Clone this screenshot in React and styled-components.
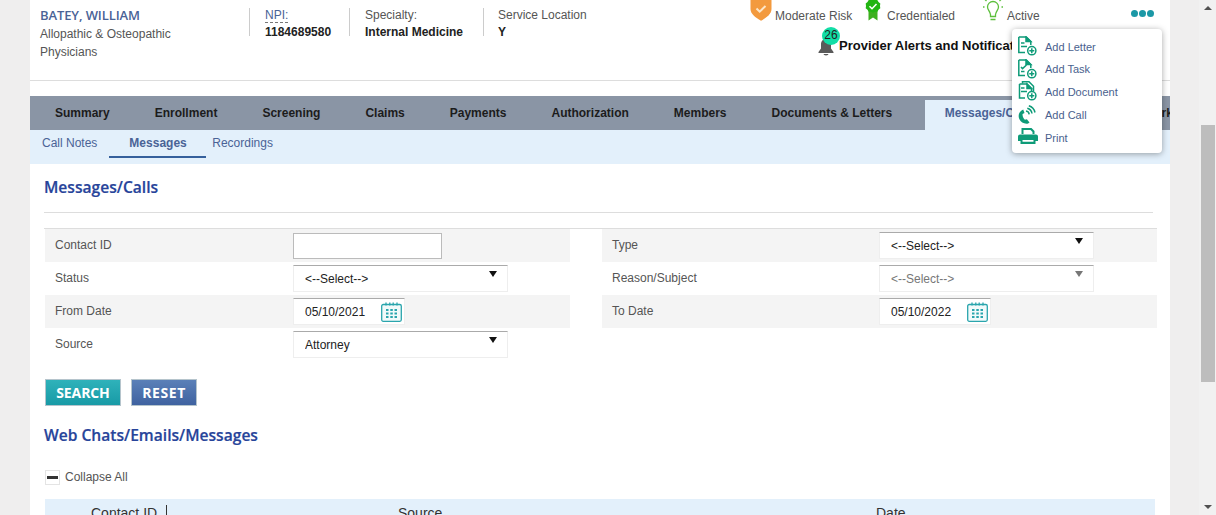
import React from "react";
import styled, { createGlobalStyle } from "styled-components";

const Global = createGlobalStyle`
  html, body { margin: 0; padding: 0; height: 515px; overflow: hidden; background: #fff; }
  body { font-family: "Liberation Sans", Arial, sans-serif; font-size: 12px; color: #555; }
  * { box-sizing: border-box; }
`;

const Page = styled.div`display: flex; width: 1216px; height: 515px; overflow: hidden; background: #efeeee;`;
const Main = styled.main`position: relative; margin-left: 30px; width: 1140px; height: 515px; background: #fff; overflow: hidden;`;
const Scrollbar = styled.div`
  margin-left: 29px; width: 17px; height: 515px; background: #f1f1f1; display: flex; flex-direction: column;
  align-items: center; position: relative;
`;
const ScrollArrow = styled.div`
  position: absolute; ${p => (p.$down ? "bottom: 6px;" : "top: 6px;")}
  width: 0; height: 0; border-left: 4px solid transparent; border-right: 4px solid transparent;
  ${p => (p.$down ? "border-top: 4px solid #505050;" : "border-bottom: 4px solid #505050;")}
`;
const Thumb = styled.div`margin-top: 125px; width: 14px; height: 257px; background: #bdbdbd;`;

const Header = styled.header`display: flex; height: 81px; border-bottom: 1px solid #ddd; padding-left: 10px;`;
const NameCol = styled.div`width: 209px; padding-top: 7px;`;
const ProviderName = styled.div`font-family: "Open Sans", sans-serif; font-weight: 600; font-size: 13px; line-height: 16px; color: #4a6396; letter-spacing: -0.1px;`;
const ProviderType = styled.div`margin-top: 2px; width: 150px; line-height: 18px; color: #555;`;
const InfoCol = styled.div`
  height: 28px; margin-top: 8px; padding-left: ${p => p.$pl || 15}px; width: ${p => p.$w}px; border-left: 1px solid #ccc;
`;
const InfoLabel = styled.div`line-height: 15px; color: ${p => (p.$npi ? "#4a6396" : "#555")};`;
const Dashed = styled.span`border-bottom: 1px dashed #777;`;
const InfoValue = styled.div`margin-top: 2px; line-height: 15px; font-weight: 700; color: #222;`;

const StatusBlock = styled.div`margin-left: 17px; width: 411px;`;
const StatusRow = styled.div`display: flex; height: 29px; align-items: flex-start;`;
const StatusItem = styled.div`display: flex; align-items: flex-start; width: ${p => p.$w}px;`;
const StatusText = styled.span`margin: 9px 0 0 ${p => p.$ml}px; line-height: 14px; color: #555;`;
const Dots = styled.div`display: flex; gap: 1px; margin: 10px 0 0 0;`;
const Dot = styled.i`display: block; width: 7px; height: 7px; border-radius: 50%; background: #1b98a6;`;
const AlertRow = styled.div`display: flex; align-items: center; margin: 0 0 0 67px; height: 32px; white-space: nowrap;`;
const BellWrap = styled.div`position: relative; width: 22px; height: 18px; margin-top: 3px;`;
const Badge = styled.span`
  position: absolute; left: 5px; top: -11px; width: 18px; height: 18px; border-radius: 50%; background: #12dda6;
  text-align: center; line-height: 17px; font-size: 12px; color: #222;
`;
const AlertText = styled.span`font-size: 13px; font-weight: 700; color: #111;`;

const Menu = styled.div`
  position: absolute; left: 982px; top: 29px; width: 150px; height: 124px; background: #fff; border-radius: 4px;
  box-shadow: 0 1px 6px rgba(0,0,0,.35); padding: 6px 0 0 6px; z-index: 5;
`;
const MenuItem = styled.div`
  display: flex; align-items: center; height: 23px; color: #4a5f8e; font-size: 11px;
  &:first-child { margin-bottom: -1px; }
`;
const MenuIcon = styled.span`display: flex; width: 27px; height: 23px; align-items: center; padding-bottom: ${p => p.$up || 0}px;`;

const Nav = styled.nav`display: flex; margin-top: 15px; padding-left: 2.5px; height: 34px; background: #8a95a5; overflow: hidden; white-space: nowrap;`;
const Tab = styled.div`
  flex: none; padding: ${p => (p.$active ? "0 17px 0 20px" : "0 22.5px")}; margin: ${p => (p.$active ? "4px 0 0 10px" : "0")};
  height: ${p => (p.$active ? 30 : 34)}px; line-height: ${p => (p.$active ? 26 : 34)}px; font-weight: 700;
  color: ${p => (p.$active ? "#4a6396" : "#1c1c1c")}; background: ${p => (p.$active ? "#e3f0fb" : "transparent")};
`;
const SubNav = styled.div`display: flex; height: 34px; background: #e3f0fb; padding-left: 12px; color: #4a6396;`;
const SubTab = styled.div`
  height: 28px; line-height: 26px; margin-right: ${p => p.$mr}px; padding: ${p => (p.$active ? "0 19.5px 0 20px" : "0")};
  font-weight: ${p => (p.$active ? 700 : 400)}; border-bottom: ${p => (p.$active ? "2px solid #35609c" : "none")};
`;

const Content = styled.div`padding-left: 14px;`;
const Title = styled.h2`
  margin: ${p => p.$mt}px 0 0; font-family: "Open Sans", sans-serif; font-size: 15.6px; line-height: 22px; font-weight: 600;
  color: #27449a; -webkit-text-stroke: .2px #27449a;
`;
const Rule = styled.div`margin-top: 14px; width: 1109px; height: 1px; background: #ddd;`;
const Form = styled.div`
  display: grid; grid-template-columns: 525px 555px; column-gap: 32px; margin-top: 15px; padding-left: 1px; width: 1113px;
  border-top: 1px solid #ddd;
`;
const Col = styled.div``;
const Row = styled.div`display: flex; align-items: center; height: 33px; background: ${p => (p.$alt ? "#f4f4f4" : "#fff")};`;
const Label = styled.label`flex: none; width: ${p => p.$w}px; padding: 0 0 2px 10px; color: #555;`;
const TextInput = styled.input`
  width: 149px; height: 26px; border: 1px solid #bbb; background: #fff; outline: none; padding: 0;
`;
const SelectWrap = styled.div`
  position: relative; width: 215px; height: 27px;
  &::after {
    content: ""; position: absolute; right: 11px; top: 6px; width: 0; height: 0; border-left: 4.5px solid transparent;
    border-right: 4.5px solid transparent; border-top: 6px solid ${p => (p.$disabled ? "#777" : "#111")};
  }
`;
const Select = styled.select`
  appearance: none; width: 100%; height: 100%; padding: 0 0 0 11px; background: #fff; font: 12px "Liberation Sans", Arial, sans-serif;
  color: ${p => (p.disabled ? "#777" : "#222")}; opacity: 1;
  border: 1px solid #eee; border-top: 1px solid #aaa; border-radius: 0; outline: none;
`;
const DateBox = styled.div`
  display: flex; align-items: center; width: 112px; height: 27px; background: #fff; border: 1px solid #eee; border-top: 1px solid #aaa;
  padding-left: 11px; color: #222;
`;
const DateText = styled.span`width: 76px;`;

const Buttons = styled.div`display: flex; gap: 10px; margin: 18px 0 0 1px;`;
const Button = styled.button`
  width: ${p => p.$w}px; height: 27px; border: 1px solid #b5c4cc; padding: 0; color: #fff;
  font-family: "Open Sans", sans-serif; font-size: 14px; font-weight: 700; letter-spacing: ${p => (p.$reset ? ".6px" : "-.1px")};
  background: ${p => (p.$reset ? "linear-gradient(#5b80b8,#3f62a0)" : "linear-gradient(#2fb2ba,#189aa6)")};
`;
const Collapse = styled.div`display: flex; align-items: center; margin: 24px 0 0 1px; height: 15px;`;
const CollapseBox = styled.span`
  display: flex; align-items: center; justify-content: center; width: 15px; height: 15px; border: 1px solid #e4e4e4; margin-right: 5px;
  &::before { content: ""; width: 11px; height: 3px; background: #333; }
`;
const CollapseText = styled.span`margin-bottom: 2px;`;
const TableHead = styled.div`
  display: flex; margin: 14px 0 0 1px; width: 1110px; height: 40px; background: #e3f0fb; padding-left: 46px;
  font-size: 14px; color: #333; line-height: 28px;
`;
const Th = styled.div`width: ${p => p.$w}px; flex: none;`;
const ThBorder = styled.span`display: inline-block; margin-left: 9px; width: 1px; height: 16px; background: #333; vertical-align: top; margin-top: 6px;`;

const G = "#0e9b78";
const DocIcon = ({ kind }) => (
  <svg width="19" height="20" viewBox="0 0 19 20" fill="none" stroke={G} strokeWidth="1.5">
    {kind === "stack" && <path d="M4.500 2.500V.8h6.500l4.500 4.500v5" />}
    <path d={kind === "stack" ? "M1.500 3h7.500l4.500 4.500v3M7 17H1.500V3" : "M.8 1h7.500l4.500 4.500v3.500M7 16.500H.8V1"} />
    <path d={kind === "stack" ? "M9 3v4.500h4.500z" : "M8 1v4.500h4.800z"} fill={G} />
    {kind === "check"
      ? <path d="M3 8l1.500 1.600L8.500 6M3 12.500h3.500" />
      : <path d="M3 7h3.500M3 10.500h6" />}
    <circle cx="13.800" cy="14.700" r="4.100" />
    <path d="M13.800 12.200v5M11.300 14.700h5" />
  </svg>
);
const CallIcon = () => (
  <svg width="19" height="19" viewBox="0 0 19 19" fill="none">
    <path d="M5.200 4.500C1 6.500-.3 10.500 1.300 14c1.500 3.300 5.200 5.300 8.800 4.500l1.400-1-2.600-3.300-2 .6C5.400 13.600 4.300 11 4.600 9l1.900-1.100z" fill={G} />
    <path d="M8 6a3.800 3.800 0 0 1 3.200 3.400M9.300 3.200a6.500 6.500 0 0 1 4.700 5.300M10.800.7a9 9 0 0 1 6.200 6.800" stroke={G} strokeWidth="1.500" />
  </svg>
);
const PrintIcon = () => (
  <svg width="20" height="16" viewBox="0 0 20 16" fill={G}>
    <path fillRule="evenodd" d="M3.500 0h10l3 3v4h-2V4l-2-2h-7v5h-2zM2 6.500h16a2 2 0 0 1 2 2v4.500h-2.500V16h-15v-3H0V8.500a2 2 0 0 1 2-2zM4.500 12v1.800h11V12z" />
  </svg>
);
const Shield = () => (
  <svg width="22" height="24" viewBox="0 0 22 24" style={{ marginTop: -3 }}>
    <path d="M.5 2h21v10c0 5-5 8.500-10.500 11.800C5.500 20.500.5 17 .5 12z" fill="#f39a3e" />
    <path d="M6.500 11.500l3.200 3.200L15.500 9" fill="none" stroke="#fde6c8" strokeWidth="2" />
  </svg>
);
const Rosette = () => (
  <svg width="16" height="22" viewBox="0 0 16 22" style={{ marginTop: -1 }}>
    <path d="M3.500 11v10.500l4.500-3 4.500 3V11z" fill="#3cb01e" />
    <path d="M8 0l2 1 2.300 0 1.200 2 1.800 1.500L15 7l.3 2.300-1.800 1.500-1.200 2-2.300 0-2 1-2-1-2.300 0-1.200-2L.7 9.300 1 7 .7 4.500 2.500 3l1.200-2L6 1z" fill="#22b512" />
    <path d="M4.500 7.200l2.500 2.500L11.500 5" fill="none" stroke="#fff" strokeWidth="1.600" />
  </svg>
);
const Bulb = () => (
  <svg width="22" height="22" viewBox="0 0 22 22" fill="none" stroke="#5cbf3c" strokeWidth="1.300" style={{ marginTop: -1 }}>
    <path d="M11 2.500a5.500 5.500 0 0 0-5.500 5.500c0 3 2.500 4 3 7.500v2h5v-2c.5-3.500 3-4.500 3-7.500A5.500 5.500 0 0 0 11 2.500zM8.500 20.500h5" />
    <path d="M3 .5l1.500 1.500M19 .5L17.500 2M1 8h1.500M19.500 8H21" />
  </svg>
);
const Bell = () => (
  <svg width="18" height="18" viewBox="0 0 18 18" fill="#5a5a5a">
    <path d="M9 1c-3 0-5 2-5 5.500v4L1.500 14v1h15v-1L14 10.500v-4C14 3 12 1 9 1z" />
    <path d="M6.500 16h5a2.500 1.500 0 0 1-5 0z" />
  </svg>
);
const Calendar = () => (
  <svg width="21" height="20" viewBox="0 0 21 20" fill="#f2fafa" stroke="#2aa5ad">
    <rect x=".7" y="2.500" width="19.600" height="16.800" rx="1.500" strokeWidth="1.300" />
    <path d="M5 .5v3M8.800 .5v3M12.200 .5v3M16 .5v3" strokeWidth="1.300" />
    <path d="M5 8h2.500M9.300 8h2.500M13.500 8H16M5 11.500h2.500M9.300 11.500h2.500M13.500 11.500H16M5 15h2.500M9.300 15h2.500M13.500 15H16" strokeWidth="2" />
  </svg>
);

const tabs = ["Summary", "Enrollment", "Screening", "Claims", "Payments", "Authorization", "Members", "Documents & Letters"];
const menu = [
  ["Add Letter", <DocIcon />, 1], ["Add Task", <DocIcon kind="check" />, 0], ["Add Document", <DocIcon kind="stack" />, 1],
  ["Add Call", <CallIcon />, 0], ["Print", <PrintIcon />, 4],
];

const Sel = ({ value, disabled }) => (
  <SelectWrap $disabled={disabled}>
    <Select disabled={disabled} defaultValue={value}><option>{value}</option></Select>
  </SelectWrap>
);
const DateField = ({ value }) => (
  <DateBox><DateText>{value}</DateText><Calendar /></DateBox>
);

export default function App() {
  return (
    <Page>
      <Global />
      <Main>
        <Header>
          <NameCol>
            <ProviderName>BATEY, WILLIAM</ProviderName>
            <ProviderType>Allopathic &amp; Osteopathic Physicians</ProviderType>
          </NameCol>
          <InfoCol $w={100}>
            <InfoLabel $npi><Dashed>NPI:</Dashed></InfoLabel>
            <InfoValue>1184689580</InfoValue>
          </InfoCol>
          <InfoCol $w={134}>
            <InfoLabel>Specialty:</InfoLabel>
            <InfoValue>Internal Medicine</InfoValue>
          </InfoCol>
          <InfoCol $w={250} $pl={14}>
            <InfoLabel>Service Location</InfoLabel>
            <InfoValue>Y</InfoValue>
          </InfoCol>
          <StatusBlock>
            <StatusRow>
              <StatusItem $w={115}><Shield /><StatusText $ml={3}>Moderate Risk</StatusText></StatusItem>
              <StatusItem $w={117}><Rosette /><StatusText $ml={6}>Credentialed</StatusText></StatusItem>
              <StatusItem $w={149}><Bulb /><StatusText $ml={3}>Active</StatusText></StatusItem>
              <Dots><Dot /><Dot /><Dot /></Dots>
            </StatusRow>
            <AlertRow>
              <BellWrap><Bell /><Badge>26</Badge></BellWrap>
              <AlertText>Provider Alerts and Notifications</AlertText>
            </AlertRow>
          </StatusBlock>
        </Header>
        <Menu>
          {menu.map(([t, ic, up]) => <MenuItem key={t}><MenuIcon $up={up}>{ic}</MenuIcon>{t}</MenuItem>)}
        </Menu>
        <Nav>
          {tabs.map(t => <Tab key={t}>{t}</Tab>)}
          <Tab $active>Messages/Calls</Tab>
          <Tab>Provider Network</Tab>
        </Nav>
        <SubNav>
          <SubTab $mr={12}>Call Notes</SubTab>
          <SubTab $active $mr={6}>Messages</SubTab>
          <SubTab>Recordings</SubTab>
        </SubNav>
        <Content>
          <Title $mt={12}>Messages/Calls</Title>
          <Rule />
          <Form>
            <Col>
              <Row $alt><Label $w={248}>Contact ID</Label><TextInput /></Row>
              <Row><Label $w={248}>Status</Label><Sel value="<--Select-->" /></Row>
              <Row $alt><Label $w={248}>From Date</Label><DateField value="05/10/2021" /></Row>
              <Row><Label $w={248}>Source</Label><Sel value="Attorney" /></Row>
            </Col>
            <Col>
              <Row $alt><Label $w={277}>Type</Label><Sel value="<--Select-->" /></Row>
              <Row><Label $w={277}>Reason/Subject</Label><Sel value="<--Select-->" disabled /></Row>
              <Row $alt><Label $w={277}>To Date</Label><DateField value="05/10/2022" /></Row>
            </Col>
          </Form>
          <Buttons>
            <Button $w={76}>SEARCH</Button>
            <Button $w={66} $reset>RESET</Button>
          </Buttons>
          <Title $mt={18}>Web Chats/Emails/Messages</Title>
          <Collapse><CollapseBox /><CollapseText>Collapse All</CollapseText></Collapse>
          <TableHead>
            <Th $w={307}>Contact ID<ThBorder /></Th>
            <Th $w={478}>Source</Th>
            <Th $w={200}>Date</Th>
          </TableHead>
        </Content>
      </Main>
      <Scrollbar>
        <ScrollArrow />
        <Thumb />
        <ScrollArrow $down />
      </Scrollbar>
    </Page>
  );
}
